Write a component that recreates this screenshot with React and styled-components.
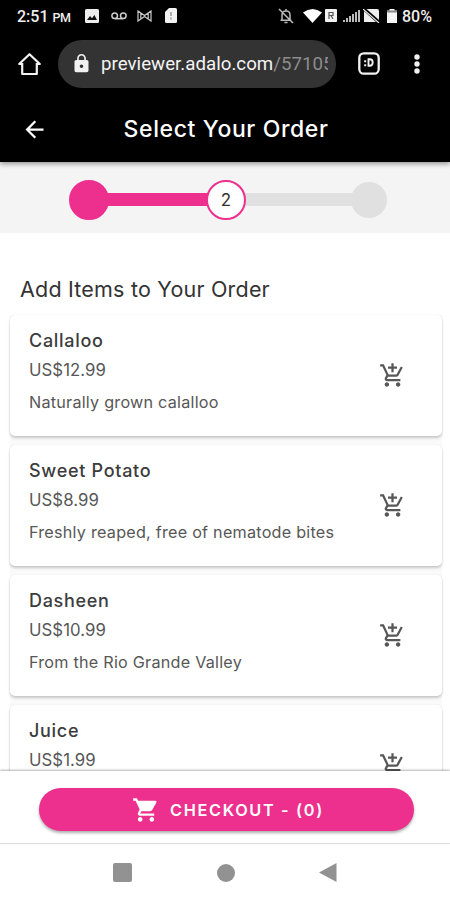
import React from "react";
import styled, { createGlobalStyle } from "styled-components";
import { MdArrowBack, MdLock, MdShoppingCart, MdOutlineAddShoppingCart } from "react-icons/md";

const PINK = "#ed2f8d";

const GlobalStyle = createGlobalStyle`
  * { box-sizing: border-box; }
  body { margin: 0; background: #fff; }
`;

const Screen = styled.div`
  width: 450px;
  height: 900px;
  display: flex;
  flex-direction: column;
  overflow: hidden;
  background: #fff;
  font-family: Inter, sans-serif;
`;

const StatusBar = styled.div`
  height: 32px;
  flex: none;
  display: flex;
  align-items: center;
  padding: 0 17px 1px 17px;
  background: #000;
  color: #eee;
  font: 500 16px/31px Roboto, sans-serif;
  white-space: nowrap;
`;

const Clock = styled.span`
  width: 68px;
  padding-top: 2px;
  small { font-size: 12.5px; margin-left: 4px; letter-spacing: -0.4px; }
`;

const Battery = styled.span`
  width: 31px;
  padding-top: 2px;
`;

const Glyph = styled.svg`
  display: block;
  flex: none;
  width: ${(p) => p.$w}px;
  height: ${(p) => p.$h}px;
  margin-right: ${(p) => p.$gap || 0}px;
`;

const Spacer = styled.div`
  flex: 1;
`;

const BrowserBar = styled.div`
  height: 63px;
  flex: none;
  display: flex;
  align-items: center;
  padding: 0 30px 0 17px;
  background: #000;
  color: #f2f2f2;
`;

const AddressPill = styled.div`
  width: 278px;
  height: 48px;
  margin: 0 22px 0 16px;
  padding: 0 8px 0 13px;
  display: flex;
  align-items: center;
  border-radius: 24px;
  background: #333;
`;

const Url = styled.div`
  flex: 1;
  margin-left: 9px;
  overflow: hidden;
  white-space: nowrap;
  font: 400 18.7px/28px Roboto, sans-serif;
  letter-spacing: 0.02px;
  color: #f4f4f4;
  span { color: #8c8c8c; }
`;

const AppHeader = styled.header`
  height: 67px;
  flex: none;
  display: grid;
  grid-template-columns: 68px 1fr 66px;
  align-items: center;
  background: #000;
  color: #fff;
  padding-top: 1px;
  box-shadow: 0 2px 5px rgba(0, 0, 0, 0.4);
  z-index: 1;
  > svg { margin-left: 21px; }
`;

const Title = styled.h1`
  margin: 0;
  text-align: center;
  font-size: 23px;
  font-weight: 500;
  letter-spacing: 0.62px;
`;

const Stepper = styled.div`
  height: 71px;
  flex: none;
  display: flex;
  align-items: center;
  padding: 4px 63px 0 69px;
  background: #f4f4f4;
`;

const Step = styled.div`
  flex: none;
  width: ${(p) => p.$size}px;
  height: ${(p) => p.$size}px;
  display: grid;
  place-items: center;
  border-radius: 50%;
  border: 2px solid ${(p) => p.$edge};
  background: ${(p) => p.$fill};
  color: #333;
  font-size: 17px;
  z-index: 1;
`;

const StepLine = styled.div`
  flex: ${(p) => p.$span};
  height: 13px;
  margin: 0 -2px;
  background: ${(p) => p.$color};
`;

const Content = styled.main`
  flex: 1;
  min-height: 0;
  overflow: hidden;
  padding: 41px 8px 0 10px;
`;

const SectionTitle = styled.h2`
  margin: 0 0 10px 10px;
  font-size: 21.5px;
  line-height: 31px;
  font-weight: 400;
  letter-spacing: 0.2px;
  color: #333;
`;

const CardList = styled.div`
  display: grid;
  gap: 9px;
  background: #fafafa;
`;

const Card = styled.article`
  height: 121px;
  display: flex;
  align-items: center;
  justify-content: space-between;
  padding: 0 36px 0 19px;
  border-radius: 5px;
  background: #fff;
  color: #575757;
  box-shadow: 0 2px 3px rgba(0, 0, 0, 0.2), 0 0 2px rgba(0, 0, 0, 0.07);
`;

const CardText = styled.div`
  height: 100%;
  padding-top: 12px;
  white-space: nowrap;
`;

const ItemName = styled.div`
  font-size: 18px;
  line-height: 28px;
  font-weight: 500;
  letter-spacing: 0.7px;
  color: #3c3c3c;
`;

const Price = styled.div`
  font-size: 16.8px;
  line-height: 30px;
  letter-spacing: 0.05px;
`;

const Description = styled.div`
  font-size: 16.2px;
  line-height: 34px;
  letter-spacing: 0.23px;
`;

const CheckoutBar = styled.footer`
  height: 73px;
  flex: none;
  padding: 17px 36px 0 39px;
  background: #fff;
  border-bottom: 1px solid #ddd;
  box-shadow: 0 -1px 2px rgba(0, 0, 0, 0.3);
  z-index: 1;
`;

const CheckoutButton = styled.button`
  width: 100%;
  height: 43px;
  display: flex;
  align-items: center;
  justify-content: center;
  gap: 10px;
  padding: 0 0 0 3px;
  border: 0;
  border-radius: 22px;
  background: ${PINK};
  color: #fff;
  font: 600 16.3px/20px Inter, sans-serif;
  letter-spacing: 1.65px;
  box-shadow: 0 2px 3px rgba(0, 0, 0, 0.32);
`;

const NavBar = styled.nav`
  height: 56px;
  flex: none;
  display: flex;
  align-items: center;
  padding: 1px 113px 0 113px;
  background: #fff;
`;

const items = [
  { name: "Callaloo", price: "US$12.99", text: "Naturally grown calalloo" },
  { name: "Sweet Potato", price: "US$8.99", text: "Freshly reaped, free of nematode bites" },
  { name: "Dasheen", price: "US$10.99", text: "From the Rio Grande Valley" },
  { name: "Juice", price: "US$1.99", text: "" },
];

function StatusIcons() {
  return (
    <>
      <Glyph $w={14} $h={14} $gap={12} viewBox="0 0 14 14">
        <rect width="14" height="14" rx="1.5" fill="#eee" />
        <path d="M2 11l3-4 2 2.2L9.4 6 12 11z" fill="#111" />
      </Glyph>
      <Glyph $w={16} $h={8} $gap={10} viewBox="0 0 16 8" fill="none" stroke="#ccc" strokeWidth="1.5">
        <circle cx="3.7" cy="3.7" r="2.8" />
        <circle cx="12.3" cy="3.7" r="2.8" />
        <path d="M3.7 6.7h8.6" />
      </Glyph>
      <Glyph $w={15} $h={12} $gap={13} viewBox="0 0 15 12" fill="none" stroke="#ccc" strokeWidth="1.2">
        <path d="M1 11V1l6.5 4.5L14 1v10L7.5 6.5zM3.8 3v6M11.2 3v6" />
      </Glyph>
      <Glyph $w={12} $h={15} viewBox="0 0 12 15">
        <path d="M4 0h6.5Q12 0 12 1.5v12q0 1.5-1.5 1.5h-9Q0 15 0 13.5V4z" fill="#f2f2f2" />
        <path d="M6 4v4M6 9.5v2" stroke="#999" strokeWidth="1.5" />
      </Glyph>
      <Spacer />
      <Glyph $w={16} $h={16} $gap={9} viewBox="0 0 16 16" fill="none" stroke="#bbb" strokeWidth="1.5">
        <path d="M4 12V7q0-4 4-4t4 4v5M2.5 12.2h11M8 1v2M6.5 14.5h3M1 1l14 14" />
      </Glyph>
      <Glyph $w={19} $h={14} $gap={3} viewBox="0 0 19 14">
        <path d="M0 3.5Q9.5-3.5 19 3.5L9.5 14z" fill="#fff" />
      </Glyph>
      <Glyph $w={12} $h={13} $gap={6} viewBox="0 0 12 13">
        <rect width="12" height="13" rx="1" fill="#f2f2f2" />
        <path d="M4 10V3.5h4v3H4.5M6 6.5L8 10" fill="none" stroke="#555" strokeWidth="1.2" />
      </Glyph>
      <Glyph $w={17} $h={12} $gap={3} viewBox="0 0 17 12">
        <path d="M0 10h2v2H0zM3 8h2v4H3zM6 6h2v6H6zM9 4h2v8H9zM12 2h2v10h-2zM15 0h2v12h-2z" fill="#bbb" />
      </Glyph>
      <Glyph $w={17} $h={14} $gap={7} viewBox="0 0 17 14">
        <path d="M3.5 0H14q2 0 2 2v9zM1 2l12 11H1z" fill="#eee" />
        <path d="M0 0l16 14" stroke="#eee" strokeWidth="1.1" />
      </Glyph>
      <Glyph $w={10} $h={14} $gap={5} viewBox="0 0 10 14">
        <path d="M0 1.5h2.5V0h5v1.5H10V14H0z" fill="#f5f5f5" />
        <path d="M0 1.5h10v2H0z" fill="#888" />
      </Glyph>
    </>
  );
}

export default function App() {
  return (
    <Screen>
      <GlobalStyle />
      <StatusBar>
        <Clock>2:51<small>PM</small></Clock>
        <StatusIcons />
        <Battery>80%</Battery>
      </StatusBar>

      <BrowserBar>
        <Glyph $w={25} $h={24} viewBox="0 0 25 24" fill="none" stroke="#f2f2f2" strokeWidth="2.2">
          <path d="M5.2 12H2.2L12.5 2.2 22.8 12h-3M5.2 11V22h14.6V11" strokeLinejoin="round" />
        </Glyph>
        <AddressPill>
          <MdLock size={21} />
          <Url>previewer.adalo.com<span>/57105</span></Url>
        </AddressPill>
        <Glyph $w={22} $h={23} viewBox="0 0 22 23" fill="none" stroke="#f2f2f2">
          <rect x="1.3" y="1.3" width="19.4" height="20.4" rx="4.5" strokeWidth="2.3" />
          <path d="M10.5 7.3h1.2q3 0 3 3.2t-3 3.2h-1.2z" strokeWidth="1.9" />
          <path d="M6.2 8.2h2v2h-2zM6.2 12.2h2v2h-2z" fill="#f2f2f2" stroke="none" />
        </Glyph>
        <Spacer />
        <Glyph $w={6} $h={20} viewBox="0 0 6 20" fill="#f2f2f2">
          <circle cx="3" cy="3" r="2.7" />
          <circle cx="3" cy="10" r="2.7" />
          <circle cx="3" cy="17" r="2.7" />
        </Glyph>
      </BrowserBar>

      <AppHeader>
        <MdArrowBack size={27} />
        <Title>Select Your Order</Title>
      </AppHeader>

      <Stepper>
        <Step $size={40} $edge={PINK} $fill={PINK} />
        <StepLine $span={101} $color={PINK} />
        <Step $size={40} $edge={PINK} $fill="#fff">2</Step>
        <StepLine $span={109} $color="#e0e0e0" />
        <Step $size={36} $edge="#e0e0e0" $fill="#e0e0e0" />
      </Stepper>

      <Content>
        <SectionTitle>Add Items to Your Order</SectionTitle>
        <CardList>
          {items.map((item) => (
            <Card key={item.name}>
              <CardText>
                <ItemName>{item.name}</ItemName>
                <Price>{item.price}</Price>
                <Description>{item.text}</Description>
              </CardText>
              <MdOutlineAddShoppingCart size={27} />
            </Card>
          ))}
        </CardList>
      </Content>

      <CheckoutBar>
        <CheckoutButton>
          <MdShoppingCart size={28} />
          CHECKOUT - (0)
        </CheckoutButton>
      </CheckoutBar>

      <NavBar>
        <Glyph $w={19} $h={19} viewBox="0 0 19 19"><rect width="19" height="19" rx="2" fill="#929292" /></Glyph>
        <Spacer />
        <Glyph $w={18} $h={18} viewBox="0 0 18 18"><circle cx="9" cy="9" r="9" fill="#929292" /></Glyph>
        <Spacer />
        <Glyph $w={18} $h={19} viewBox="0 0 18 19"><path d="M17.5 0v19L0 9.5z" fill="#929292" /></Glyph>
      </NavBar>
    </Screen>
  );
}
